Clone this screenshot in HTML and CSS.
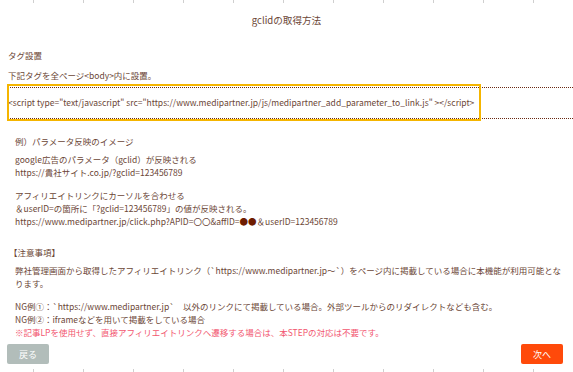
FILE: index.html
```html
<!DOCTYPE html>
<html lang="ja">
<head>
<meta charset="UTF-8">
<meta name="viewport" content="width=device-width, initial-scale=1.0">
<title>gclidの取得方法</title>
<link rel="stylesheet" href="styles.css">
</head>
<body>
<div class="ruler"></div>
<div class="dialog">
  <h2 class="title">gclidの取得方法</h2>

  <p class="label">タグ設置</p>
  <p class="text">下記タグを全ページ&lt;body&gt;内に設置。</p>
  <div class="code">
    <span class="code-line">&lt;script type="text/javascript" src="https://www.medipartner.jp/js/medipartner_add_parameter_to_link.js" &gt;&lt;/script&gt;</span>
    <span class="highlight"></span>
  </div>

  <div class="example">
    <p class="label">例）パラメータ反映のイメージ</p>
    <p class="text">google広告のパラメータ（gclid）が反映される<br>https://貴社サイト.co.jp/?gclid=123456789</p>
    <p class="text gap">アフィリエイトリンクにカーソルを合わせる<br>＆userID=の箇所に「?gclid=123456789」の値が反映される。<br>https://www.medipartner.jp/click.php?APID=〇〇&amp;affID=<span class="dot">●●</span>＆userID=123456789</p>
  </div>

  <p class="label notice">【注意事項】</p>
  <div class="notes">
    <p class="text">弊社管理画面から取得したアフィリエイトリンク（`https://www.medipartner.jp～`）をページ内に掲載している場合に本機能が利用可能となります。</p>
    <p class="text gap">NG例①：`https://www.medipartner.jp`　以外のリンクにて掲載している場合。外部ツールからのリダイレクトなども含む。<br>NG例②：iframeなどを用いて掲載をしている場合</p>
    <p class="text warn">※記事LPを使用せず、直接アフィリエイトリンクへ遷移する場合は、本STEPの対応は不要です。</p>
  </div>

  <div class="actions">
    <button class="btn back">戻る</button>
    <button class="btn next">次へ</button>
  </div>
</div>
<div class="ruler bottom"></div>
</body>
</html>
```

FILE: styles.css
```css
body {
  margin: 0;
  font-family: "Noto Sans CJK JP", "Noto Sans", sans-serif;
  color: #6b4636;
  background: #fff;
  overflow: hidden;
}
.ruler {
  height: 3px;
  background: repeating-linear-gradient(to right, transparent 0, transparent 33px, #cfcfcf 33px, #cfcfcf 34px, transparent 34px, transparent 50px);
}
.ruler.bottom { margin-top: 5px; }
.dialog { padding: 0 8px; }
.title {
  margin: 10px 0 0;
  font-size: 9.6px;
  font-weight: normal;
  text-align: center;
  line-height: 14px;
}
p { margin: 0; }
.label, .text { font-size: 8.5px; line-height: 13px; }
.dialog > .label { margin-top: 22px; }
.dialog > .text { margin-top: 7px; }
.code {
  position: relative;
  margin: 5px -8px 0 0;
  border-top: 1px dotted #6b2a14;
  border-bottom: 1px dotted #6b2a14;
  padding: 7px 0 9px;
  font-size: 8.5px;
  line-height: 14px;
  white-space: nowrap;
}
.code-line { display: block; }
.highlight {
  position: absolute;
  left: -1px;
  top: -4px;
  width: 470px;
  height: 33px;
  border: 2px solid #f5b500;
}
.example { padding-left: 7px; margin-top: 16px; }
.example .label { margin-bottom: 5px; }
.gap { margin-top: 10px; }
.dot { color: #6e1c00; }
.dialog > .notice { margin-top: 18px; padding-left: 1px; }
.notes { padding-left: 7px; margin-top: 5px; }
.warn { color: #f2566f; }
.actions {
  display: flex;
  justify-content: space-between;
  margin-top: 5px;
  padding-right: 2px;
}
.btn {
  border: none;
  border-radius: 2px;
  color: #fff;
  font-family: inherit;
  font-size: 9px;
  width: 42px;
  height: 20px;
  padding: 0;
  margin-left: -1px;
}
.back { background: #b2bdba; }
.next { background: #ff4a0a; }
```
